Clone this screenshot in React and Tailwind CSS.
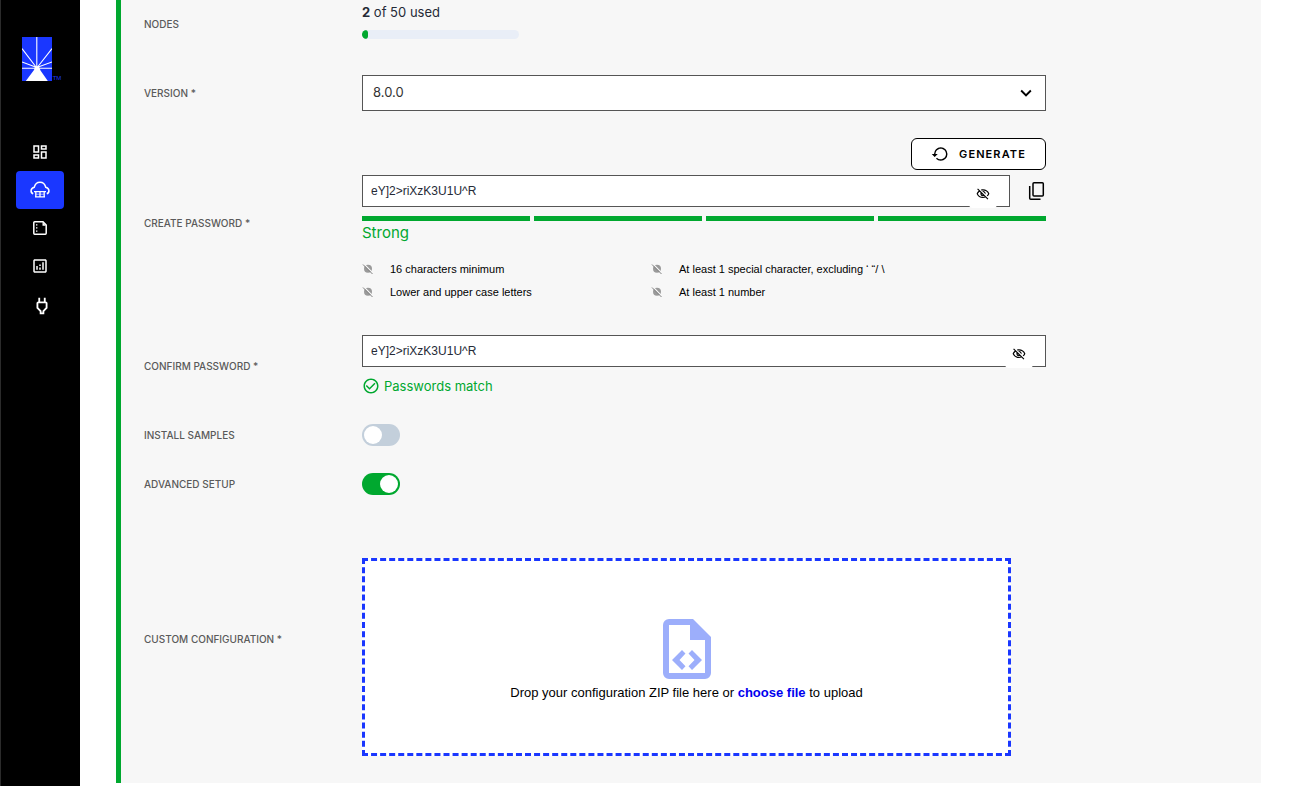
import React, { useState } from "react";
import {
  MdOutlineDashboard,
  MdOutlineAnalytics,
  MdOutlinePower,
  MdOutlineVisibilityOff,
  MdCheckCircleOutline,
  MdKeyboardArrowDown,
} from "react-icons/md";

function Logo() {
  return (
    <a href="#home" aria-label="Home" className="flex items-end justify-center gap-px pl-0.5">
      <svg width="30" height="44" viewBox="0 0 30 44" aria-hidden="true">
        <rect width="30" height="44" fill="#1a37ff" />
        <g stroke="#fff" strokeWidth="1.1">
          <path d="M14.8 0V31M0 11.5L14.8 31M30 11.5L14.8 31M0 25L14.8 30.5M30 25L14.8 30.5M0 31.3H30" />
        </g>
        <path d="M13 29.5h4l1.500 4L25.800 44H3.800L12 33z" fill="#fff" />
      </svg>
      <span className="text-[6px] leading-[6px] text-[#1a37ff]">TM</span>
    </a>
  );
}

function CloudServerIcon() {
  return (
    <svg width="20" height="18" viewBox="0 0 20 18" fill="none" stroke="#fff" strokeWidth="1.5" aria-hidden="true">
      <path d="M3.200 12.800C.2 11.800.2 7.200 4.300 6.200 5 3 7.200 1.200 10 1.200S15 3 15.700 6.200c4.100 1 4.100 5.600 1.100 6.600" />
      <path d="M4 10.700H16M5.800 10.500V15.800M14.200 10.500V15.800M5 15.800H15M10 11V15.500" strokeWidth="1.300" />
      <path d="M6 13.200H14" strokeWidth=".6" />
    </svg>
  );
}

function NotesIcon() {
  return (
    <svg width="14" height="14" viewBox="0 0 14 14" fill="none" aria-hidden="true">
      <path d="M1.700.8H10L13.200 4V12.300a.9.9 0 0 1-.9.9H1.700a.9.9 0 0 1-.9-.9V1.700a.9.9 0 0 1 .9-.9z" stroke="#fff" strokeWidth="1.500" />
      <path d="M9.500 1V4.700H13z" fill="#fff" />
      <path d="M3 3.200h1.400v1.300H3zM3 6.300h1.400v1.300H3zM3 9.400h1.400v1.300H3z" fill="#fff" />
    </svg>
  );
}

function ResetIcon() {
  return (
    <svg width="18" height="18" viewBox="0 0 24 24" fill="currentColor" aria-hidden="true">
      <path d="M13 3a9 9 0 0 0-9 9H1l3.890 3.890.07.14L9 12H6c0-3.870 3.130-7 7-7s7 3.130 7 7-3.130 7-7 7c-1.930 0-3.680-.79-4.940-2.060l-1.420 1.420A8.954 8.954 0 0 0 13 21a9 9 0 0 0 0-18z" />
    </svg>
  );
}

function CopyIcon() {
  return (
    <svg width="18" height="20" viewBox="0 0 18 20" fill="none" stroke="currentColor" strokeWidth="1.500" aria-hidden="true">
      <rect x="5" y="1.700" width="10.300" height="13.300" rx="1" />
      <path d="M1.700 5V17.300a1 1 0 0 0 1 1H12.500" />
    </svg>
  );
}

function RuleIcon() {
  return (
    <svg width="11" height="11" viewBox="0 0 11 11" className="shrink-0" aria-hidden="true">
      <circle cx="6" cy="4.800" r="4" fill="#9a9a9a" />
      <path d="M2 0L11 9" stroke="#f7f7f7" strokeWidth="1.200" />
      <path d="M1 .5L10.500 10" stroke="#808080" strokeWidth="1" />
    </svg>
  );
}

function CodeFileIcon() {
  return (
    <svg width="48" height="60" viewBox="0 0 48 60" fill="#9caefb" aria-hidden="true">
      <path
        fillRule="evenodd"
        d="M6 0H30L48 18V54a6 6 0 0 1-6 6H6a6 6 0 0 1-6-6V6A6 6 0 0 1 6 0zM6 6V54H42V21H27V6z"
      />
      <path d="M19 31l3.500 3.500L16.500 41l6 6.300L19 51 9 41zM29 31l-3.500 3.500L31.500 41l-6 6.300L29 51 39 41z" />
    </svg>
  );
}

const navItems = [
  { name: "Dashboard", icon: <MdOutlineDashboard size={18} />, box: "h-[38px]" },
  { name: "Deployments", icon: <CloudServerIcon />, box: "h-[38px] bg-[#1a37ff]" },
  { name: "Logs", icon: <NotesIcon />, box: "h-[38px]" },
  { name: "Analytics", icon: <MdOutlineAnalytics size={18} />, box: "h-[38px]" },
  { name: "Integrations", icon: <MdOutlinePower size={22} />, box: "h-[42px] pl-1" },
];

function Sidebar() {
  return (
    <aside className="w-20 shrink-0 border-l border-[#2b2b2b] bg-black pt-[37px]">
      <Logo />
      <nav className="mt-[52px] flex flex-col pl-[15px] pr-4">
        {navItems.map((n) => (
          <a key={n.name} href="#nav" aria-label={n.name} className={`flex items-center justify-center rounded text-white ${n.box}`}>
            {n.icon}
          </a>
        ))}
      </nav>
    </aside>
  );
}

function Row({ label, htmlFor, children }) {
  return (
    <div className="flex items-center">
      <label htmlFor={htmlFor} className="w-[218px] shrink-0 font-[Inter,sans-serif] text-[10px] leading-4 font-medium text-[#5a5a5a]">
        {label}
      </label>
      <div className="max-w-[684px] min-w-0 flex-1">{children}</div>
    </div>
  );
}

function PasswordField({ id, value, onChange, visible, onToggle }) {
  return (
    <div className="relative flex-1">
      <input
        id={id}
        type={visible ? "text" : "password"}
        value={value}
        onChange={(e) => onChange(e.target.value)}
        className="block h-8 w-full border border-[#555] bg-white pr-12 pl-2 text-[12px] text-[#252a36] outline-none"
      />
      <button
        type="button"
        aria-label="Toggle visibility"
        onClick={onToggle}
        className="absolute top-[5px] right-[13px] flex h-7 w-7 items-center justify-center rounded bg-white text-black"
      >
        <MdOutlineVisibilityOff size={14} />
      </button>
    </div>
  );
}

function Toggle({ id, defaultChecked }) {
  return (
    <input
      id={id}
      type="checkbox"
      role="switch"
      defaultChecked={defaultChecked}
      className="block h-[22px] w-[38px] appearance-none rounded-full bg-[#c3cfdb] p-0.5 before:block before:h-[18px] before:w-[18px] before:rounded-full before:bg-white before:content-[''] checked:bg-[#00a82f] checked:before:ml-4"
    />
  );
}

const rules = [
  "16 characters minimum",
  "At least 1 special character, excluding ‘ “/ \\",
  "Lower and upper case letters",
  "At least 1 number",
];

export default function App() {
  const [password, setPassword] = useState("eY]2>riXzK3U1U^R");
  const [confirm, setConfirm] = useState("eY]2>riXzK3U1U^R");
  const [showPassword, setShowPassword] = useState(true);
  const [showConfirm, setShowConfirm] = useState(true);

  return (
    <div className="flex min-h-screen bg-white font-['Liberation_Sans',Arial,sans-serif] text-black">
      <Sidebar />
      <main className="min-w-0 flex-1 px-9">
        <form className="flex flex-col gap-[27px] border-l-[5px] border-[#00a82f] bg-[#f7f7f7] pb-[27px] pl-[23px]">
          <Row label="NODES" htmlFor="nodes">
            <div className="pb-[9px]">
              <p className="font-[Inter,sans-serif] text-[13px] leading-6 text-[#252a36]">
                <b>2</b> of 50 used
              </p>
              <div id="nodes" className="mt-1.5 h-[9px] w-[157px] overflow-hidden rounded-full bg-[#e9eef7]">
                <div className="h-full w-1.5 rounded-full bg-[#00a82f]" />
              </div>
            </div>
          </Row>

          <Row label="VERSION *" htmlFor="version">
            <div className="relative">
              <select id="version" className="block h-9 w-full appearance-none border border-[#555] bg-white px-2.5 font-[Inter,sans-serif] text-[13px] text-[#333] outline-none">
                <option>8.0.0</option>
              </select>
              <MdKeyboardArrowDown size={22} className="pointer-events-none absolute top-[7px] right-[9px] stroke-black" />
            </div>
          </Row>

          <Row label="CREATE PASSWORD *" htmlFor="password">
            <div className="pb-[5px]">
              <div className="flex justify-end">
                <button type="button" className="flex h-8 w-[135px] items-center justify-center gap-2.5 rounded-md border border-black bg-white font-[Inter,sans-serif] text-[11px] font-semibold tracking-widest">
                  <ResetIcon />
                  GENERATE
                </button>
              </div>
              <div className="mt-[5px] flex items-center">
                <PasswordField id="password" value={password} onChange={setPassword} visible={showPassword} onToggle={() => setShowPassword(!showPassword)} />
                <button type="button" aria-label="Copy password" className="flex w-9 justify-end">
                  <CopyIcon />
                </button>
              </div>
              <div className="mt-[9px] grid grid-cols-4 gap-1">
                <div className="h-[5px] bg-[#00a82f]" />
                <div className="h-[5px] bg-[#00a82f]" />
                <div className="h-[5px] bg-[#00a82f]" />
                <div className="h-[5px] bg-[#00a82f]" />
              </div>
              <p className="font-[Inter,sans-serif] text-[15px] leading-6 text-[#00a82f]">Strong</p>
              <ul className="mt-[13px] grid w-[578px] max-w-full grid-cols-2 gap-y-px text-[11px] leading-[22px]">
                {rules.map((r) => (
                  <li key={r} className="flex items-center gap-[17px] whitespace-nowrap">
                    <RuleIcon />
                    {r}
                  </li>
                ))}
              </ul>
            </div>
          </Row>

          <Row label="CONFIRM PASSWORD *" htmlFor="confirm">
            <PasswordField id="confirm" value={confirm} onChange={setConfirm} visible={showConfirm} onToggle={() => setShowConfirm(!showConfirm)} />
            <p className="mt-2 flex items-center gap-1 font-[Inter,sans-serif] text-[13px] leading-[22px] text-[#00a82f]">
              <MdCheckCircleOutline size={18} />
              Passwords match
            </p>
          </Row>

          <Row label="INSTALL SAMPLES" htmlFor="samples">
            <Toggle id="samples" />
          </Row>

          <Row label="ADVANCED SETUP" htmlFor="advanced">
            <Toggle id="advanced" defaultChecked />
          </Row>

          <Row label="CUSTOM CONFIGURATION *" htmlFor="config">
            <div className="pt-9 pr-[35px]">
              <div className="flex flex-col items-center border-[3px] border-dashed border-[#1a37ff] bg-white pt-[58px] pb-[50px]">
                <CodeFileIcon />
                <p className="mt-1 text-[13px] leading-5">
                  Drop your configuration ZIP file here or{" "}
                  <label htmlFor="config" className="cursor-pointer font-bold text-[#0000ee]">
                    choose file
                  </label>{" "}
                  to upload
                </p>
                <input id="config" type="file" className="sr-only" />
              </div>
            </div>
          </Row>
        </form>
      </main>
    </div>
  );
}
